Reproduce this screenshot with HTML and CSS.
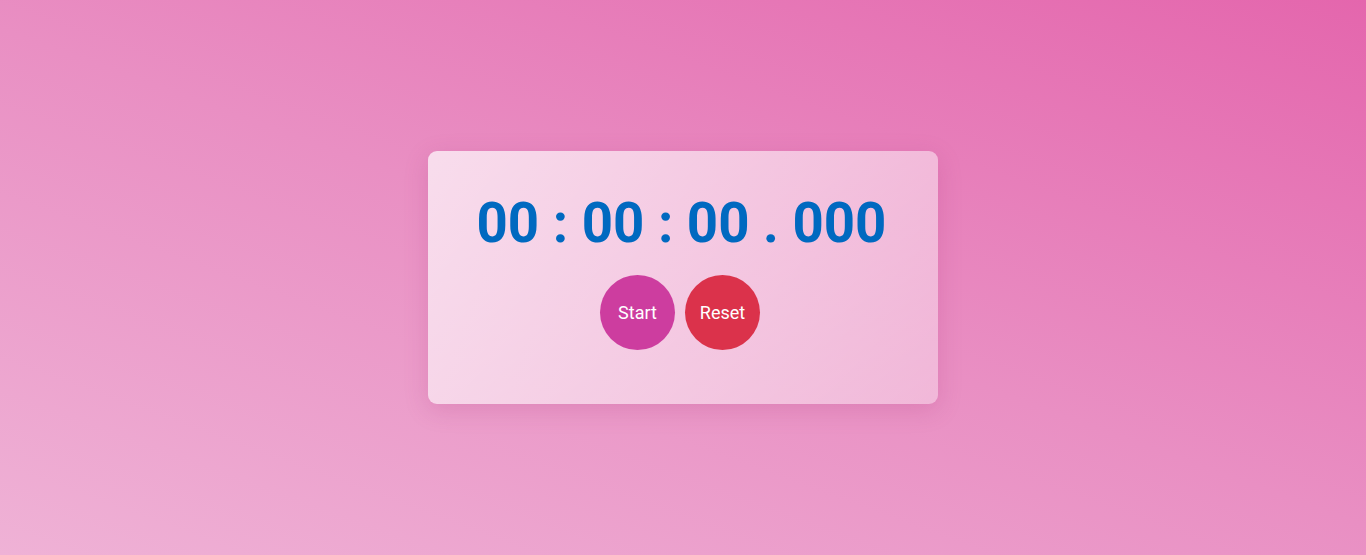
FILE: index.html
```html
<!DOCTYPE html>
<html lang="en">
<head>
<meta charset="utf-8">
<title>Stopwatch</title>
<link rel="stylesheet" href="styles.css">
</head>
<body>
<main class="page">
  <section class="card">
    <h1 class="display">00 : 00 : 00 . 000</h1>
    <div class="controls">
      <button class="btn btn-start" type="button">Start</button>
      <button class="btn btn-reset" type="button">Reset</button>
    </div>
  </section>
</main>
</body>
</html>
```

FILE: styles.css
```css
html, body {
  margin: 0;
  padding: 0;
  height: 100%;
}

body {
  font-family: Roboto, "Liberation Sans", Arial, sans-serif;
  background: linear-gradient(20deg, #efb2d6 0%, #e98fc3 50%, #e466ad 100%);
}

.page {
  height: 100%;
  display: flex;
  align-items: center;
  justify-content: center;
}

.card {
  width: 510px;
  box-sizing: border-box;
  padding: 39px 0 54px;
  border-radius: 9px;
  background: linear-gradient(135deg, rgba(255, 255, 255, 0.7) 0%, rgba(255, 255, 255, 0.35) 100%);
  box-shadow: 0 6px 24px rgba(160, 40, 110, 0.18);
  text-align: center;
}

.display {
  margin: 0;
  padding-right: 3px;
  font-size: 54.6px;
  line-height: 66px;
  font-weight: 700;
  color: #0069c0;
  letter-spacing: 0;
}

.controls {
  margin-top: 19px;
  display: flex;
  justify-content: center;
  gap: 10px;
  padding-right: 6px;
}

.btn {
  width: 75px;
  height: 75px;
  border: none;
  border-radius: 50%;
  color: #ffffff;
  font-family: Roboto, "Liberation Sans", Arial, sans-serif;
  font-size: 18px;
  padding: 0;
  cursor: pointer;
}

.btn-start {
  background: #cd3d9f;
}

.btn-reset {
  background: #db324b;
}
```
